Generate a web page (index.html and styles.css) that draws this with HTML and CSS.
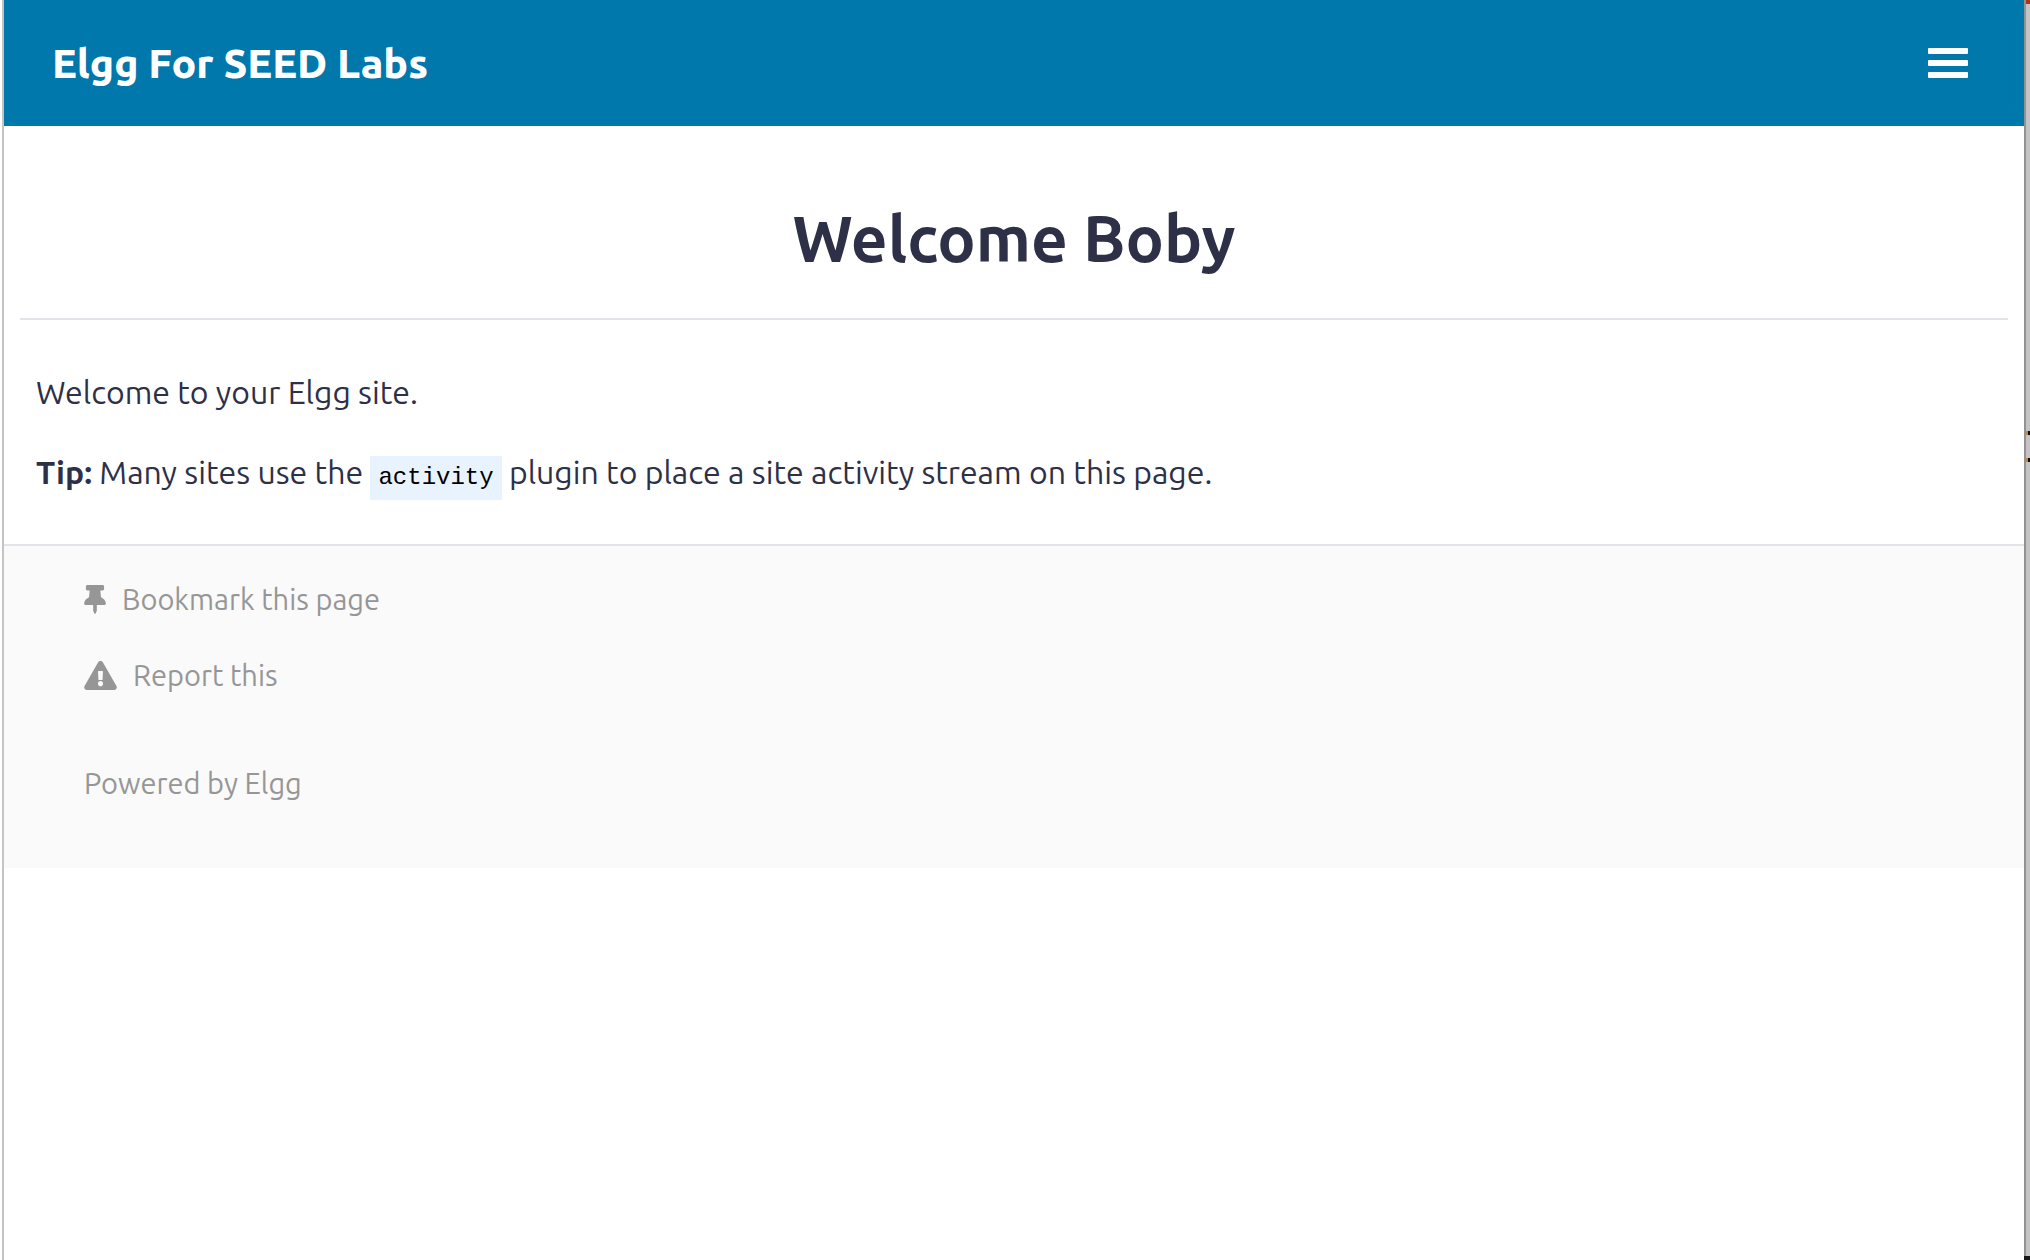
FILE: index.html
```html
<!DOCTYPE html>
<html lang="en">
<head>
<meta charset="utf-8">
<meta name="viewport" content="width=device-width, initial-scale=1">
<title>Elgg For SEED Labs</title>
<link rel="stylesheet" href="styles.css">
</head>
<body>
<div class="window">
  <div class="page">
    <header class="topbar">
      <a class="brand" href="#">Elgg For SEED Labs</a>
      <button class="menu-button" type="button" aria-label="Menu"><span class="bar"></span><span class="bar"></span><span class="bar"></span></button>
    </header>
    <main class="content">
      <h1 class="title">Welcome Boby</h1>
      <div class="intro">
        <p>Welcome to your Elgg site.</p>
        <p><strong>Tip:</strong> Many sites use the <code>activity</code> plugin to place a site activity stream on this page.</p>
      </div>
    </main>
    <footer class="footer">
      <ul class="links">
        <li><a href="#"><svg class="pin" viewBox="0 0 384 512" aria-hidden="true"><path d="M298 214.300L285.800 96H328c13.300 0 24-10.700 24-24V24c0-13.300-10.700-24-24-24H56C42.700 0 32 10.700 32 24v48c0 13.300 10.700 24 24 24h42.200L86 214.300C37.500 236.800 0 277.300 0 328c0 13.300 10.700 24 24 24h136v104c0 1.200.3 2.500.8 3.600l24 48c2.900 5.900 11.400 5.900 14.300 0l24-48c.6-1.100.8-2.300.8-3.600V352h136c13.300 0 24-10.700 24-24 .1-51.200-38-91.400-85.900-113.700z"/></svg>Bookmark this page</a></li>
        <li><a href="#"><svg class="warn" viewBox="0 0 576 512" aria-hidden="true"><path d="M569.500 440C588 472 564.800 512 527.900 512H48.100c-36.900 0-60-40.100-41.600-72L246.400 24c18.500-32 64.700-32 83.200 0l239.900 416zM288 354c-25.400 0-46 20.600-46 46s20.600 46 46 46 46-20.600 46-46-20.600-46-46-46zm-43.700-165.300l7.400 136c.3 6.400 5.600 11.300 12 11.300h48.500c6.400 0 11.600-5 12-11.300l7.400-136c.4-6.900-5.100-12.700-12-12.700h-63.400c-6.900 0-12.300 5.800-11.900 12.700z"/></svg>Report this</a></li>
      </ul>
      <a class="powered" href="#">Powered by Elgg</a>
    </footer>
  </div>
  <div class="backdrop" aria-hidden="true"><span class="accent"></span><span class="speck upper"></span><span class="speck lower"></span><span class="base"></span></div>
</div>
</body>
</html>
```
FILE: styles.css
```css
* { box-sizing: border-box; }
body {
  margin: 0;
  background: #fff;
  color: #2d3047;
  font: 400 32px/48px Ubuntu, "Noto Sans", "Open Sans", sans-serif;
}
a { color: inherit; text-decoration: none; }
.window {
  display: flex;
  min-height: 100vh;
  padding-left: 2px;
}
.page {
  flex: 1;
  border-left: 2px solid #c4c4c4;
}
.topbar {
  display: flex;
  align-items: center;
  justify-content: space-between;
  height: 126px;
  padding: 0 56px 0 48px;
  background: #0078ac;
}
.brand { color: #fff; font-size: 41px; font-weight: 800; }
.menu-button {
  display: flex;
  flex-direction: column;
  gap: 6px;
  width: 40px;
  padding: 0;
  border: 0;
  background: none;
}
.bar { height: 6px; border-radius: 1px; background: #fff; }
.content { padding: 64px 16px 12px; }
.title {
  margin: 0;
  padding: 8px 0 40px;
  border-bottom: 2px solid #e3e3e9;
  font-size: 64px;
  font-weight: 600;
  line-height: 80px;
  text-align: center;
}
.intro { padding: 48px 16px 0; }
.intro p { margin: 0 0 32px; }
strong { font-weight: 700; }
code {
  display: inline-block;
  height: 44px;
  padding: 0 8px;
  background: #e8f3fe;
  color: #000;
  font: 24px/44px "Liberation Mono", monospace;
}
.footer {
  padding: 29px 80px 61px;
  border-top: 2px solid #e3e3e9;
  background: #fafafa;
  color: #969696;
  font-size: 29px;
}
.links { margin: 0 0 60px; padding: 0; list-style: none; }
.links li { margin-bottom: 28px; }
.links a { display: flex; align-items: center; }
svg { height: 29px; fill: currentColor; }
.pin { width: 22px; margin-right: 16px; }
.warn { width: 33px; margin-right: 16px; }
.powered { display: block; }
.backdrop {
  position: relative;
  width: 6px;
  border-left: 2px solid #929292;
  background: #c4c4c4;
}
.accent, .base, .speck { position: absolute; right: 0; width: 4px; height: 4px; }
.accent { top: 0; background: #ae3511; }
.base { bottom: 0; width: 6px; background: #181818; }
.speck { background: linear-gradient(90deg, #b88b50 50%, #180c10 50%); }
.upper { top: 431px; }
.lower { top: 458px; }
```
